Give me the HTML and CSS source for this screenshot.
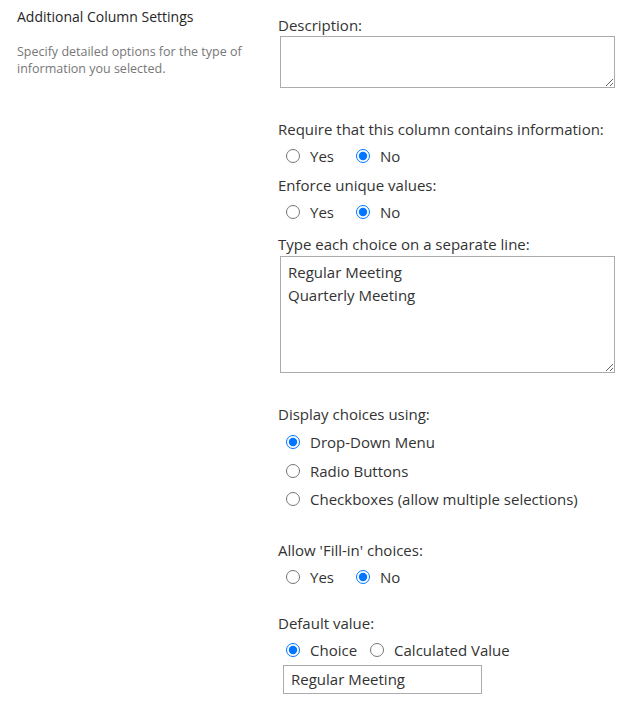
FILE: index.html
```html
<!DOCTYPE html>
<html lang="en">
<head>
<meta charset="utf-8">
<title>Additional Column Settings</title>
<link rel="stylesheet" href="styles.css">
</head>
<body>
<div class="section">
  <div class="section-info">
    <h3 class="section-title">Additional Column Settings</h3>
    <p class="section-desc">Specify detailed options for the type of information you selected.</p>
  </div>
  <div class="section-body">
    <div class="label">Description:</div>
    <textarea class="ta ta-desc"></textarea>

    <div class="label gap-lg">Require that this column contains information:</div>
    <div class="radio-row">
      <label class="opt opt-yes"><input type="radio" name="req"> Yes</label>
      <label class="opt"><input type="radio" name="req" checked> No</label>
    </div>

    <div class="label gap-sm">Enforce unique values:</div>
    <div class="radio-row">
      <label class="opt opt-yes"><input type="radio" name="uniq"> Yes</label>
      <label class="opt"><input type="radio" name="uniq" checked> No</label>
    </div>

    <div class="label gap-md">Type each choice on a separate line:</div>
    <textarea class="ta ta-choices">Regular Meeting
Quarterly Meeting</textarea>

    <div class="label gap-lg">Display choices using:</div>
    <div class="radio-stack">
      <label class="opt"><input type="radio" name="disp" checked> Drop-Down Menu</label>
      <label class="opt"><input type="radio" name="disp"> Radio Buttons</label>
      <label class="opt"><input type="radio" name="disp"> Checkboxes (allow multiple selections)</label>
    </div>

    <div class="label gap-xl">Allow 'Fill-in' choices:</div>
    <div class="radio-row">
      <label class="opt opt-yes"><input type="radio" name="fill"> Yes</label>
      <label class="opt"><input type="radio" name="fill" checked> No</label>
    </div>

    <div class="label gap-def">Default value:</div>
    <div class="radio-row">
      <label class="opt opt-choice"><input type="radio" name="def" checked> Choice</label>
      <label class="opt"><input type="radio" name="def"> Calculated Value</label>
    </div>
    <input class="txt" type="text" value="Regular Meeting">
  </div>
</div>
</body>
</html>
```
FILE: styles.css
```css
html, body {
  margin: 0;
  padding: 0;
  background: #ffffff;
}
body {
  font-family: "Open Sans", "Noto Sans", sans-serif;
  font-size: 15px;
  color: #333333;
}
.section {
  display: flex;
  padding: 7px 0 0 17px;
}
.section-info {
  width: 240px;
  flex: none;
  margin-right: 21px;
}
.section-title {
  margin: 0;
  font-size: 14px;
  font-weight: normal;
  line-height: 20px;
  color: #262626;
}
.section-desc {
  margin: 16px 0 0;
  font-size: 12.5px;
  line-height: 17px;
  color: #777777;
}
.section-body {
  padding-top: 8px;
  width: 345px;
}
.label {
  line-height: 20px;
  color: #333333;
}
.gap-sm { margin-top: 5px; }
.gap-md { margin-top: 8px; }
.gap-lg { margin-top: 31px; }
.gap-xl { margin-top: 26px; }
.gap-def { margin-top: 22px; }

.ta {
  display: block;
  box-sizing: border-box;
  width: 335px;
  margin: 1px 0 0 2px;
  border: 1px solid #ababab;
  border-radius: 0;
  padding: 4px 7px;
  font-family: inherit;
  font-size: 15px;
  line-height: 23px;
  color: #333333;
  resize: both;
}
.ta-desc { height: 52px; }
.ta-choices { height: 117px; margin-top: 2px; }

.radio-row {
  display: flex;
  height: 28px;
  align-items: center;
  margin-top: 3px;
  padding-left: 8px;
}
.radio-stack {
  margin-top: 4px;
  padding-left: 8px;
}
.radio-stack .opt {
  height: 28.5px;
}
.opt {
  display: flex;
  align-items: center;
  line-height: 20px;
  color: #333333;
}
.opt input {
  width: 14px;
  height: 14px;
  margin: 0 10px 0 0;
}
.opt-yes { width: 70px; }
.opt-choice { margin-right: 13px; }

.txt {
  display: block;
  box-sizing: border-box;
  width: 199px;
  height: 29px;
  margin: 1px 0 0 5px;
  border: 1px solid #ababab;
  border-radius: 0;
  padding: 0 7px;
  font-family: inherit;
  font-size: 15px;
  color: #333333;
}
```
